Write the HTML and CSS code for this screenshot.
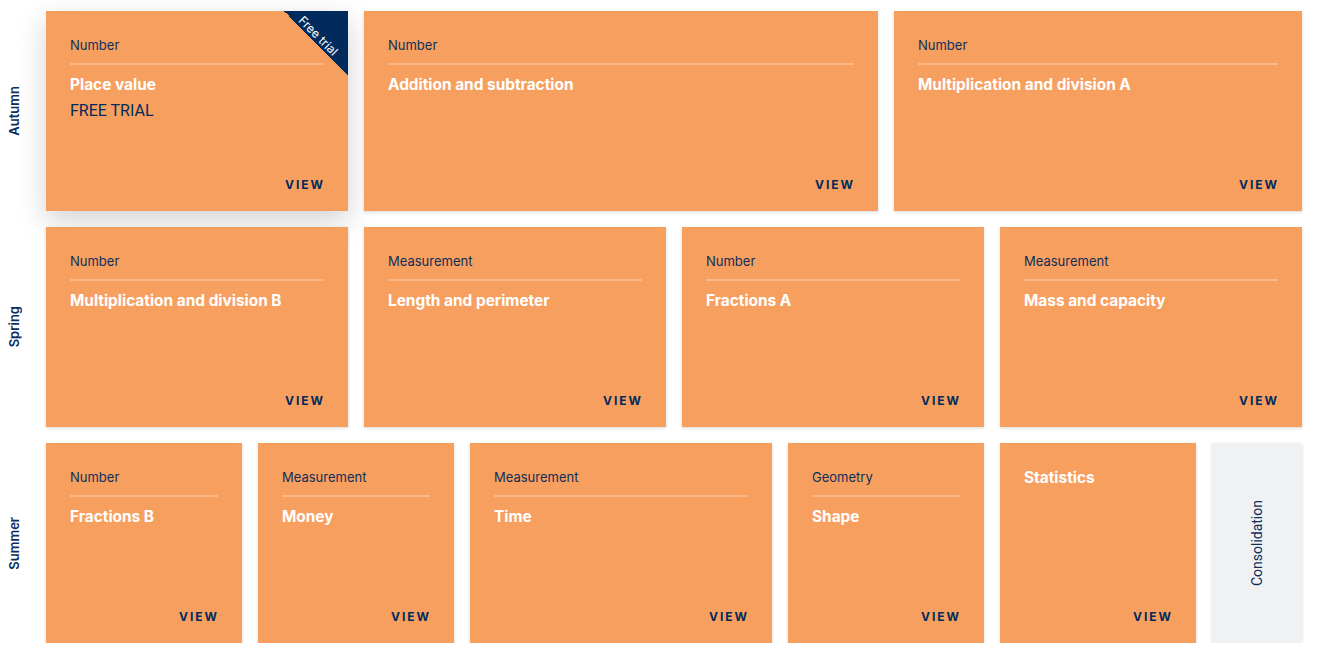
FILE: index.html
```html
<!DOCTYPE html>
<html lang="en">
<head>
<meta charset="utf-8">
<title>Scheme of learning</title>
<link rel="stylesheet" href="styles.css">
</head>
<body>
<main class="plan">
  <section class="term">
    <div class="term-label"><span>Autumn</span></div>
    <div class="weeks">
      <a class="block span-3 featured">
        <div class="ribbon"><span>Free trial</span></div>
        <div class="cat">Number</div>
        <div class="title">Place value</div>
        <div class="trial">FREE TRIAL</div>
        <div class="view">VIEW</div>
      </a>
      <a class="block span-5">
        <div class="cat">Number</div>
        <div class="title">Addition and subtraction</div>
        <div class="view">VIEW</div>
      </a>
      <a class="block span-4">
        <div class="cat">Number</div>
        <div class="title">Multiplication and division A</div>
        <div class="view">VIEW</div>
      </a>
    </div>
  </section>
  <section class="term">
    <div class="term-label"><span>Spring</span></div>
    <div class="weeks">
      <a class="block span-3">
        <div class="cat">Number</div>
        <div class="title">Multiplication and division B</div>
        <div class="view">VIEW</div>
      </a>
      <a class="block span-3">
        <div class="cat">Measurement</div>
        <div class="title">Length and perimeter</div>
        <div class="view">VIEW</div>
      </a>
      <a class="block span-3">
        <div class="cat">Number</div>
        <div class="title">Fractions A</div>
        <div class="view">VIEW</div>
      </a>
      <a class="block span-3">
        <div class="cat">Measurement</div>
        <div class="title">Mass and capacity</div>
        <div class="view">VIEW</div>
      </a>
    </div>
  </section>
  <section class="term">
    <div class="term-label"><span>Summer</span></div>
    <div class="weeks">
      <a class="block span-2">
        <div class="cat">Number</div>
        <div class="title">Fractions B</div>
        <div class="view">VIEW</div>
      </a>
      <a class="block span-2">
        <div class="cat">Measurement</div>
        <div class="title">Money</div>
        <div class="view">VIEW</div>
      </a>
      <a class="block span-3">
        <div class="cat">Measurement</div>
        <div class="title">Time</div>
        <div class="view">VIEW</div>
      </a>
      <a class="block span-2">
        <div class="cat">Geometry</div>
        <div class="title">Shape</div>
        <div class="view">VIEW</div>
      </a>
      <a class="block span-2">
        <div class="title first">Statistics</div>
        <div class="view">VIEW</div>
      </a>
      <div class="consolidation"><span>Consolidation</span></div>
    </div>
  </section>
</main>
</body>
</html>
```
FILE: styles.css
```css
* { box-sizing: border-box; }
html, body { margin: 0; background: #ffffff; }
body {
  font-family: Inter, Lato, "Liberation Sans", sans-serif;
  color: #002b5c;
}
.plan {
  display: flex;
  flex-direction: column;
  gap: 16px;
  padding-top: 11px;
}
.term {
  display: flex;
  height: 200px;
}
.term-label {
  width: 46px;
  flex: none;
  display: flex;
  align-items: center;
  padding-left: 6px;
}
.term-label span {
  writing-mode: vertical-rl;
  transform: rotate(180deg);
  font-size: 13px;
  font-weight: 600;
  line-height: 16px;
  color: #0a2e63;
}
.weeks {
  display: grid;
  grid-template-columns: repeat(12, 90px);
  column-gap: 16px;
}
.block {
  position: relative;
  display: flex;
  flex-direction: column;
  background: #f79f5f;
  padding: 24px 24px 16px;
  box-shadow: 0 1px 3px rgba(0, 0, 0, 0.16);
  overflow: hidden;
}
.featured {
  box-shadow: 0 10px 28px rgba(0, 0, 0, 0.18);
}
.span-2 { grid-column: span 2; }
.span-3 { grid-column: span 3; }
.span-4 { grid-column: span 4; }
.span-5 { grid-column: span 5; }
.cat {
  font-size: 13px;
  line-height: 20px;
  color: #0f2e5a;
  padding-bottom: 8px;
  border-bottom: 2px solid #fbb786;
}
.title {
  margin-top: 10px;
  font-size: 15.4px;
  font-weight: 700;
  line-height: 20px;
  color: #ffffff;
}
.title.first { margin-top: 1px; }
.trial {
  margin-top: 4px;
  font-family: Roboto, "Liberation Sans", sans-serif;
  font-size: 16px;
  line-height: 24px;
  color: #002b5c;
}
.view {
  margin-top: auto;
  align-self: flex-end;
  font-size: 12px;
  font-weight: 700;
  line-height: 20px;
  letter-spacing: 2px;
  margin-right: -1px;
  color: #002b5c;
}
.ribbon {
  position: absolute;
  top: 0;
  right: 0;
  width: 64px;
  height: 64px;
  background: linear-gradient(45deg, transparent 50%, #002b5c 50%);
}
.ribbon span {
  position: absolute;
  top: 25px;
  left: 34px;
  transform: translate(-50%, -50%) rotate(45deg);
  font-size: 12px;
  line-height: 1;
  color: #ffffff;
  white-space: nowrap;
}
.consolidation {
  background: #f0f1f3;
  display: flex;
  align-items: center;
  justify-content: center;
  box-shadow: 0 1px 3px rgba(0, 0, 0, 0.14);
}
.consolidation span {
  writing-mode: vertical-rl;
  transform: rotate(180deg);
  font-family: Roboto, "Liberation Sans", sans-serif;
  font-size: 14px;
  color: #0f2e5a;
}
```
